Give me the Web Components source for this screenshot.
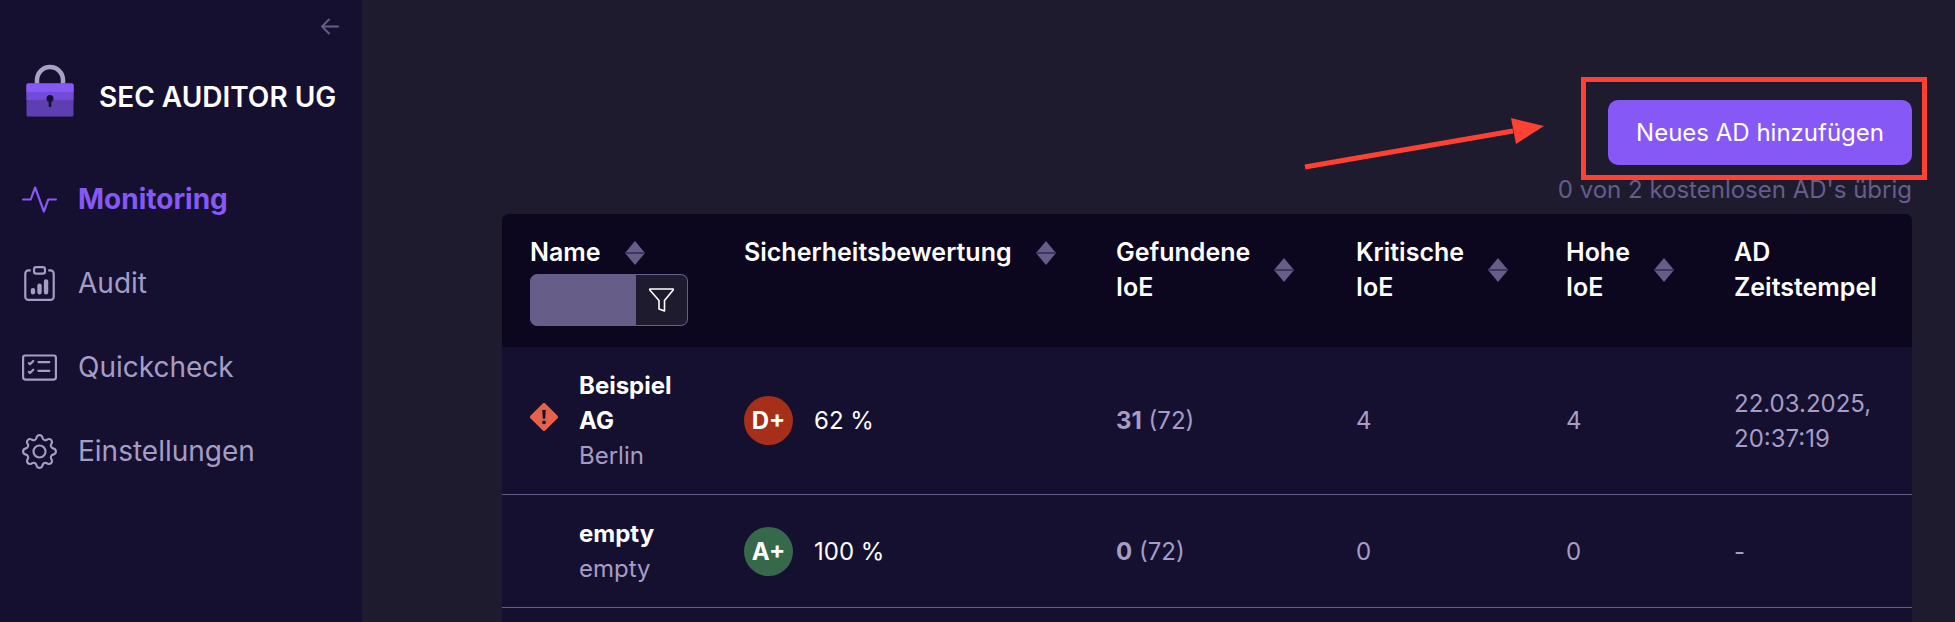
<!DOCTYPE html>
<html lang="de">
<head>
<meta charset="utf-8">
<meta name="viewport" content="width=device-width, initial-scale=1">
<title>SEC AUDITOR UG – Monitoring</title>
<style>
  :root {
    --bg: #1e1b2f;
    --panel: #161030;
    --head: #0c061f;
    --accent: #8658f6;
    --muted: #665d88;
    --soft: #a59dc6;
    --mark: #fe4133;
  }
  body {
    margin: 0;
    background: var(--bg);
    color: #fff;
    font: 24px/35px Inter, "Liberation Sans", sans-serif;
  }
</style>
</head>
<body>
<sec-app></sec-app>

<script>
const define = (name, html, setup) => customElements.define(name, class extends HTMLElement {
  connectedCallback() {
    if (this.shadowRoot) return;
    const template = document.createElement('template');
    template.innerHTML = html;
    const root = this.attachShadow({ mode: 'open' });
    root.append(template.content.cloneNode(true));
    if (setup) setup(this, root);
  }
});

const ICONS = {
  activity: '<path d="M6 2a.5.5 0 0 1 .47.33L10 12.036l1.53-4.208A.5.5 0 0 1 12 7.5h3.5a.5.5 0 0 1 0 1h-3.15l-1.88 5.17a.5.5 0 0 1-.94 0L6 3.964 4.47 8.171A.5.5 0 0 1 4 8.5H.5a.5.5 0 0 1 0-1h3.15l1.88-5.17A.5.5 0 0 1 6 2"/>',
  clipboard: '<path d="M4 11a1 1 0 1 1 2 0v1a1 1 0 1 1-2 0zm6-4a1 1 0 1 1 2 0v5a1 1 0 1 1-2 0zM7 9a1 1 0 0 1 2 0v3a1 1 0 1 1-2 0z"/><path d="M4 1.5H3a2 2 0 0 0-2 2V14a2 2 0 0 0 2 2h10a2 2 0 0 0 2-2V3.5a2 2 0 0 0-2-2h-1v1h1a1 1 0 0 1 1 1V14a1 1 0 0 1-1 1H3a1 1 0 0 1-1-1V3.5a1 1 0 0 1 1-1h1z"/><path d="M9.5 1a.5.5 0 0 1 .5.5v1a.5.5 0 0 1-.5.5h-3a.5.5 0 0 1-.5-.5v-1a.5.5 0 0 1 .5-.5zm-3-1A1.5 1.5 0 0 0 5 1.5v1A1.5 1.5 0 0 0 6.5 4h3A1.5 1.5 0 0 0 11 2.5v-1A1.5 1.5 0 0 0 9.5 0z"/>',
  checklist: '<path d="M14.5 3a.5.5 0 0 1 .5.5v9a.5.5 0 0 1-.5.5h-13a.5.5 0 0 1-.5-.5v-9a.5.5 0 0 1 .5-.5zm-13-1A1.5 1.5 0 0 0 0 3.5v9A1.5 1.5 0 0 0 1.5 14h13a1.5 1.5 0 0 0 1.5-1.5v-9A1.5 1.5 0 0 0 14.5 2z"/><path d="M7 5.5a.5.5 0 0 1 .5-.5h5a.5.5 0 0 1 0 1h-5a.5.5 0 0 1-.5-.5m-1.496-.854a.5.5 0 0 1 0 .708l-1.5 1.5a.5.5 0 0 1-.708 0l-.5-.5a.5.5 0 1 1 .708-.708l.146.147 1.146-1.147a.5.5 0 0 1 .708 0M7 9.5a.5.5 0 0 1 .5-.5h5a.5.5 0 0 1 0 1h-5a.5.5 0 0 1-.5-.5m-1.496-.854a.5.5 0 0 1 0 .708l-1.5 1.5a.5.5 0 0 1-.708 0l-.5-.5a.5.5 0 0 1 .708-.708l.146.147 1.146-1.147a.5.5 0 0 1 .708 0"/>',
  gear: '<path d="M8 4.754a3.246 3.246 0 1 0 0 6.492 3.246 3.246 0 0 0 0-6.492M5.754 8a2.246 2.246 0 1 1 4.492 0 2.246 2.246 0 0 1-4.492 0"/><path d="M9.796 1.343c-.527-1.79-3.065-1.79-3.592 0l-.094.319a.873.873 0 0 1-1.255.52l-.292-.16c-1.64-.892-3.433.902-2.54 2.541l.159.292a.873.873 0 0 1-.52 1.255l-.319.094c-1.79.527-1.79 3.065 0 3.592l.319.094a.873.873 0 0 1 .52 1.255l-.16.292c-.892 1.64.901 3.434 2.541 2.54l.292-.159a.873.873 0 0 1 1.255.52l.094.319c.527 1.79 3.065 1.79 3.592 0l.094-.319a.873.873 0 0 1 1.255-.52l.292.16c1.64.893 3.434-.902 2.54-2.541l-.159-.292a.873.873 0 0 1 .52-1.255l.319-.094c1.79-.527 1.79-3.065 0-3.592l-.319-.094a.873.873 0 0 1-.52-1.255l.16-.292c.893-1.64-.902-3.433-2.541-2.54l-.292.159a.873.873 0 0 1-1.255-.52zm-2.633.283c.246-.835 1.428-.835 1.674 0l.094.319a1.873 1.873 0 0 0 2.693 1.115l.291-.16c.764-.415 1.6.42 1.184 1.185l-.159.292a1.873 1.873 0 0 0 1.116 2.692l.318.094c.835.246.835 1.428 0 1.674l-.319.094a1.873 1.873 0 0 0-1.115 2.693l.16.291c.415.764-.42 1.6-1.185 1.184l-.291-.159a1.873 1.873 0 0 0-2.693 1.116l-.094.318c-.246.835-1.428.835-1.674 0l-.094-.319a1.873 1.873 0 0 0-2.692-1.115l-.292.16c-.764.415-1.6-.42-1.184-1.185l.159-.291A1.873 1.873 0 0 0 1.945 8.93l-.319-.094c-.835-.246-.835-1.428 0-1.674l.319-.094A1.873 1.873 0 0 0 3.06 4.377l-.16-.292c-.415-.764.42-1.6 1.185-1.184l.292.159a1.873 1.873 0 0 0 2.692-1.115z"/>'
};

define('sec-nav-item', `
  <style>
    :host { display: block; }
    a { display: flex; align-items: center; gap: 21px; height: 84px; padding: 0 22px;
        color: var(--soft); font-size: 28px; text-decoration: none; }
    :host([active]) a { color: var(--accent); font-weight: 700; }
    svg { width: 35px; height: 35px; flex: none; fill: currentColor; }
  </style>
  <a href="#"><svg viewBox="0 0 16 16" aria-hidden="true"></svg><slot></slot></a>`,
  (host, root) => {
    root.querySelector('svg').innerHTML = ICONS[host.getAttribute('icon')];
    if (host.hasAttribute('active')) root.querySelector('a').setAttribute('aria-current', 'page');
  });

define('sec-sidebar', `
  <style>
    :host { display: flex; flex-direction: column; width: 362px; flex: none; background: var(--panel); }
    .collapse { align-self: flex-end; display: flex; margin: 14px 20px 0 0; padding: 0; border: 0;
                background: none; color: var(--muted); cursor: pointer; }
    .brand { display: flex; align-items: center; gap: 20px; height: 70px; margin: 18px 0 31px; padding: 0 21px; }
    .brand strong { padding-top: 12px; font-size: 28px; font-weight: 600; white-space: nowrap; }
    svg { display: block; flex: none; }
  </style>
  <button class="collapse" type="button" aria-label="Seitenleiste einklappen">
    <svg width="24" height="24" viewBox="0 0 24 24" fill="none" stroke="currentColor" stroke-width="2" stroke-linecap="round" stroke-linejoin="round"><path d="M20 12.500H4M11 5.500l-7 7 7 7"/></svg>
  </button>
  <div class="brand">
    <svg width="58" height="56" viewBox="21 63 58 56" aria-hidden="true">
      <path d="M37 86v-6a13 13 0 0 1 26 0v6" fill="none" stroke="#a9a1c8" stroke-width="4.500"/>
      <rect x="26.500" y="83.500" width="47" height="33" rx="1.500" fill="#5d3fb2"/>
      <path d="M26.500 100V85a1.500 1.500 0 0 1 1.500-1.500h44a1.500 1.500 0 0 1 1.500 1.500v15z" fill="#744ada"/>
      <path d="M26.500 92v-7a1.500 1.500 0 0 1 1.500-1.500h44a1.500 1.500 0 0 1 1.500 1.500v7z" fill="#8658f6"/>
      <circle cx="50" cy="98.500" r="3.500" fill="#161030"/>
      <rect x="48.700" y="99" width="2.600" height="8" fill="#161030"/>
    </svg>
    <strong>SEC AUDITOR UG</strong>
  </div>
  <nav aria-label="Hauptnavigation"><slot></slot></nav>`);

/* Frames its content and points an arrow at it. */
define('sec-highlight', `
  <style>
    :host { display: block; position: relative; }
    .frame { position: absolute; inset: -23px -15px -15px -27px; border: 5px solid var(--mark); pointer-events: none; }
    .arrow { position: absolute; top: 10px; right: calc(100% + 59px); pointer-events: none; }
  </style>
  <slot></slot>
  <div class="frame"></div>
  <svg class="arrow" width="250" height="65" viewBox="0 0 250 65" fill="var(--mark)" aria-hidden="true">
    <path d="M6 57 214 21" stroke="var(--mark)" stroke-width="5"/>
    <path d="M245 16 212 8l5 26z"/>
  </svg>`);

define('sec-button', `
  <style>
    :host { display: block; }
    button { display: block; height: 65px; padding: 0 28px; border: 0; border-radius: 10px;
             background: var(--accent); color: #fff; font: inherit; white-space: nowrap; cursor: pointer; }
  </style>
  <button type="button"><slot></slot></button>`);

define('sec-sort', `
  <style>
    :host { display: block; flex: none; }
    button { display: block; padding: 0; border: 0; background: none; color: var(--muted); cursor: pointer; }
    svg { display: block; }
  </style>
  <button type="button" aria-label="Sortieren">
    <svg width="20" height="24" viewBox="0 0 20 24" fill="currentColor"><path d="M10 0l10 12-10 12L0 12z"/><path d="M1 11h18v2H1z" fill="#3f3760"/></svg>
  </button>`);

define('sec-filter', `
  <style>
    :host { display: flex; height: 52px; margin-top: 4px; }
    input { flex: 1; min-width: 0; box-sizing: border-box; margin: 0; padding: 0 10px; border: 1px solid var(--muted);
            border-radius: 7px 0 0 7px; background: var(--muted); color: #fff; font: inherit; }
    button { display: grid; place-items: center; width: 52px; padding: 0; border: 1px solid var(--muted); border-left: 0;
             border-radius: 0 7px 7px 0; background: var(--bg); color: #fff; cursor: pointer; }
  </style>
  <input type="text" aria-label="Nach Name filtern">
  <button type="button" aria-label="Filter">
    <svg width="26" height="26" viewBox="0 0 26 26" fill="none" stroke="currentColor" stroke-width="1.600" stroke-linejoin="round"><path d="M0.800 2h23.400v1L15.500 13.500V24L10 22v-8.500L0.800 3z"/></svg>
  </button>`);

define('sec-grade', `
  <style>
    :host { display: flex; align-items: center; gap: 21px; color: #fff; }
    b { display: grid; place-items: center; width: 49px; height: 49px; border-radius: 50%; background: #a62f19; }
    :host([level="good"]) b { background: #35694a; }
  </style>
  <b></b><span><slot></slot></span>`,
  (host, root) => { root.querySelector('b').textContent = host.getAttribute('grade'); });

define('sec-ad-table', `
  <style>
    :host { display: block; border-radius: 7px 7px 0 0; background: var(--panel); overflow: hidden; }
    table { width: 100%; table-layout: fixed; border-collapse: separate; border-spacing: 0; color: var(--soft); }
    th, td { padding: 21px 28px; text-align: left; }
    th { background: var(--head); color: #fff; font-size: 25px; font-weight: 600; vertical-align: top; }
    td { border-bottom: 1px solid var(--muted); vertical-align: middle; }
    th:last-child, td:last-child { padding-right: 21px; }
    .sort { display: flex; align-items: center; gap: 24px; }
    .name { display: grid; grid-template-columns: 28px 1fr; align-items: center; gap: 21px; }
    .name div { grid-column: 2; }
    .name svg { margin-bottom: 7px; }
    .name b { display: block; color: #fff; }
  </style>
  <table>
    <colgroup>
      <col style="width:214px"><col style="width:372px"><col style="width:240px">
      <col style="width:210px"><col style="width:168px"><col style="width:206px">
    </colgroup>
    <thead>
      <tr>
        <th scope="col"><div class="sort">Name<sec-sort></sec-sort></div><sec-filter></sec-filter></th>
        <th scope="col"><div class="sort">Sicherheitsbewertung<sec-sort></sec-sort></div></th>
        <th scope="col"><div class="sort"><span>Gefundene<br>IoE</span><sec-sort></sec-sort></div></th>
        <th scope="col"><div class="sort"><span>Kritische<br>IoE</span><sec-sort></sec-sort></div></th>
        <th scope="col"><div class="sort"><span>Hohe<br>IoE</span><sec-sort></sec-sort></div></th>
        <th scope="col">AD<br>Zeitstempel</th>
      </tr>
    </thead>
    <tbody>
      <tr>
        <td><div class="name">
          <svg width="28" height="28" viewBox="0 0 28 28" role="img" aria-label="Warnung"><path d="M12.500.7a2.100 2.100 0 0 1 3 0l11.800 11.800a2.100 2.100 0 0 1 0 3L15.500 27.300a2.100 2.100 0 0 1-3 0L.7 15.500a2.100 2.100 0 0 1 0-3z" fill="#e5634b"/><path d="M12.200 7h3.600l-.6 8.800h-2.400z" fill="#161030"/><circle cx="14" cy="19.300" r="1.900" fill="#161030"/></svg>
          <div><b>Beispiel AG</b>Berlin</div>
        </div></td>
        <td><sec-grade grade="D+">62 %</sec-grade></td>
        <td><b>31</b> (72)</td>
        <td>4</td>
        <td>4</td>
        <td>22.03.2025, 20:37:19</td>
      </tr>
      <tr>
        <td><div class="name"><div><b>empty</b>empty</div></div></td>
        <td><sec-grade grade="A+" level="good">100 %</sec-grade></td>
        <td><b>0</b> (72)</td>
        <td>0</td>
        <td>0</td>
        <td>-</td>
      </tr>
    </tbody>
  </table>`);

define('sec-app', `
  <style>
    :host { display: flex; min-height: 100vh; }
    main { flex: 1; min-width: 0; display: flex; flex-direction: column; box-sizing: border-box; padding: 100px 43px 0 140px; }
    .actions { display: flex; flex-direction: column; align-items: flex-end; gap: 7px; margin-bottom: 7px; }
    p { margin: 0; color: var(--muted); }
    sec-ad-table { flex: 1; }
  </style>
  <sec-sidebar>
    <sec-nav-item icon="activity" active>Monitoring</sec-nav-item>
    <sec-nav-item icon="clipboard">Audit</sec-nav-item>
    <sec-nav-item icon="checklist">Quickcheck</sec-nav-item>
    <sec-nav-item icon="gear">Einstellungen</sec-nav-item>
  </sec-sidebar>
  <main>
    <div class="actions">
      <sec-highlight><sec-button>Neues AD hinzufügen</sec-button></sec-highlight>
      <p>0 von 2 kostenlosen AD's übrig</p>
    </div>
    <sec-ad-table></sec-ad-table>
  </main>`);
</script>
</body>
</html>
